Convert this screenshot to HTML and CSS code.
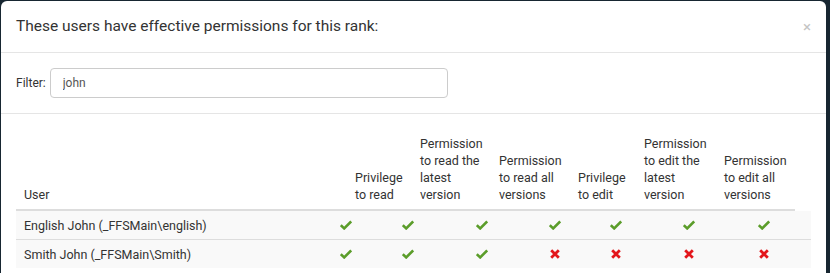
FILE: index.html
```html
<!DOCTYPE html>
<html lang="en">
<head>
  <meta charset="UTF-8">
  <title>Effective permissions</title>
  <link rel="stylesheet" href="styles.css">
</head>
<body>
  <div class="modal">
    <div class="modal-header">
      <h4 class="modal-title">These users have effective permissions for this rank:</h4>
      <span class="close">&times;</span>
    </div>

    <div class="modal-filter">
      <label for="filter">Filter:</label>
      <input type="text" id="filter" value="john">
    </div>

    <div class="modal-table">
      <div class="table-head">
        <div class="th">User</div>
        <div class="th">Privilege to read</div>
        <div class="th">Permission to read the latest version</div>
        <div class="th">Permission to read all versions</div>
        <div class="th">Privilege to edit</div>
        <div class="th">Permission to edit the latest version</div>
        <div class="th">Permission to edit all versions</div>
      </div>

      <div class="table-body" id="tableBody"></div>
    </div>
  </div>

  <svg width="0" height="0" class="defs">
    <symbol id="ok" viewBox="0 0 12 10">
      <path d="M0.8 5.2 L4.2 8.4 L11.2 1.4" fill="none" stroke="#5b9d2a" stroke-width="2.6"/>
    </symbol>
    <symbol id="no" viewBox="0 0 10 10">
      <path d="M1.2 1.2 L8.8 8.8 M8.8 1.2 L1.2 8.8" fill="none" stroke="#e3161b" stroke-width="2.8"/>
    </symbol>
  </svg>

  <script>
    const users = [
      { name: 'English John (_FFSMain\\english)', rights: [1, 1, 1, 1, 1, 1, 1] },
      { name: 'Smith John (_FFSMain\\Smith)', rights: [1, 1, 1, 0, 0, 0, 0] }
    ];

    const tableBody = document.getElementById('tableBody');

    users.forEach(user => {
      const row = document.createElement('div');
      row.className = 'tr';

      const nameCell = document.createElement('div');
      nameCell.className = 'td';
      nameCell.textContent = user.name;
      row.appendChild(nameCell);

      user.rights.forEach(right => {
        const cell = document.createElement('div');
        cell.className = 'td icon';
        const id = right ? 'ok' : 'no';
        cell.innerHTML = `<svg class="mark-${id}"><use href="#${id}"/></svg>`;
        row.appendChild(cell);
      });

      tableBody.appendChild(row);
    });
  </script>
</body>
</html>
```

FILE: styles.css
```css
body {
  margin: 0;
  background: #172631;
  font-family: Roboto, "Liberation Sans", sans-serif;
  color: #333;
  overflow: hidden;
}
.defs {
  position: absolute;
}
.modal {
  margin: 1px 0 0 1px;
  width: 825px;
  height: calc(100vh - 1px);
  background: #fff;
  border-radius: 6px 6px 0 0;
}
.modal-header {
  display: flex;
  align-items: center;
  justify-content: space-between;
  padding: 15px;
  border-bottom: 1px solid #e5e5e5;
}
.modal-title {
  margin: 0;
  font-size: 15.5px;
  font-weight: normal;
  line-height: 21px;
}
.close {
  color: #c4c4c4;
  font-size: 15px;
  line-height: 20px;
}
.modal-filter {
  display: flex;
  align-items: center;
  gap: 4px;
  padding: 15px;
  border-bottom: 1px solid #e5e5e5;
  font-size: 12px;
}
.modal-filter input {
  width: 398px;
  height: 30px;
  box-sizing: border-box;
  border: 1px solid #ccc;
  border-radius: 4px;
  padding: 0 12px;
  font-family: inherit;
  font-size: 12px;
  color: #555;
}
.modal-table {
  padding: 13px 15px 0;
  font-size: 12.5px;
}
.table-head {
  display: grid;
  grid-template-columns: 331px 65px 79px 79px 66px 80px 79px;
  align-items: end;
  width: 779px;
  border-bottom: 2px solid #ddd;
}
.th {
  padding: 8px 8px 6px;
  line-height: 17px;
}
.tr {
  display: grid;
  grid-template-columns: 316px 62px 74px 73px 61px 73px 75px 61px;
  height: 28px;
  align-items: center;
  background: #f9f9f9;
}
.tr + .tr {
  border-top: 1px solid #ddd;
}
.td {
  padding: 0 8px;
}
.td.icon {
  display: flex;
}
.mark-ok {
  width: 12px;
  height: 10px;
}
.mark-no {
  width: 10px;
  height: 10px;
  margin-left: 1px;
}
```
